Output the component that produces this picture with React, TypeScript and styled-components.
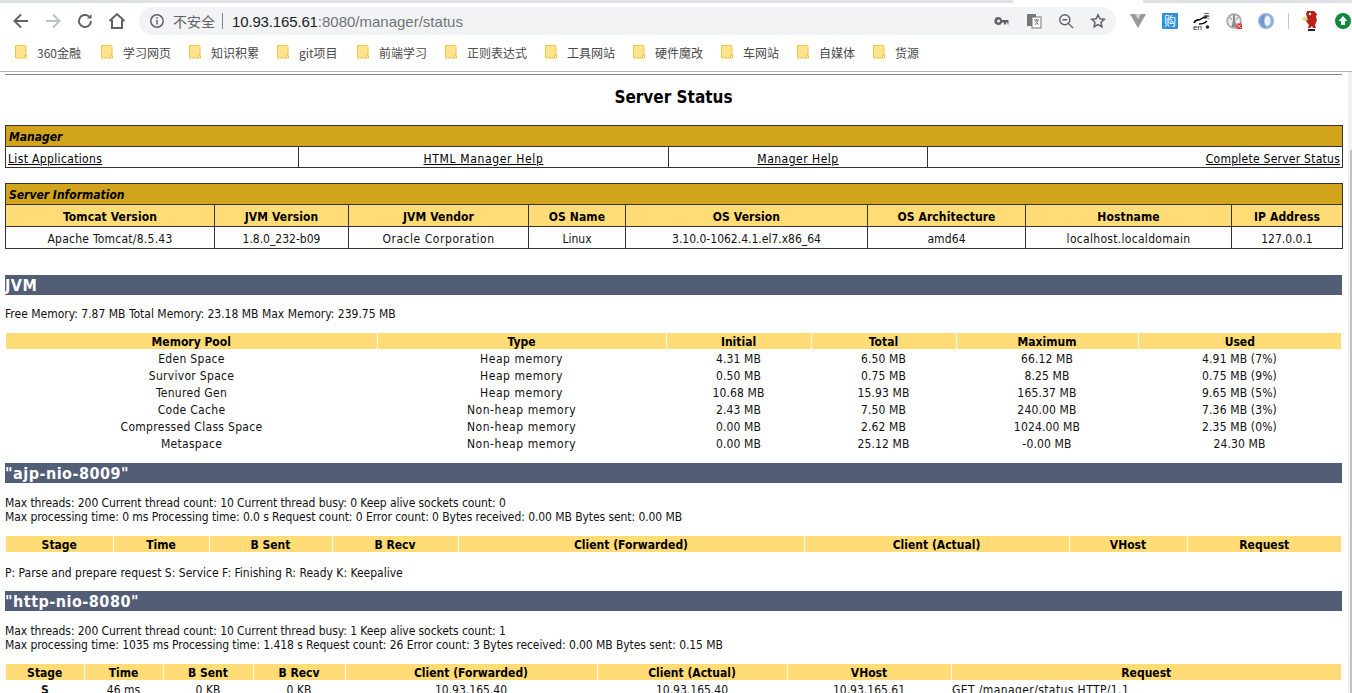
import { createGlobalStyle } from 'styled-components';
import styled from 'styled-components';

const GlobalStyle = createGlobalStyle`
  html, body {
    margin: 0;
    padding: 0;
    background: #fff;
    overflow: hidden;
    height: 693px;
  }
  body {
    font-family: 'DejaVu Sans', 'Noto Sans CJK SC', sans-serif;
    font-stretch: condensed;
    font-size: 12px;
    color: #111;
  }
`;

const Browser = styled.div`
  width: 1352px;
  height: 72px;
  background: #fff;
  border-bottom: 1px solid #b4b4b4;
  box-sizing: border-box;
`;
const TabStrip = styled.div`
  height: 3px;
  display: flex;
  background: #dee1e6;
  padding-left: 1013px;
`;
const ActiveTab = styled.div`
  width: 130px;
  background: #fff;
`;
const Toolbar = styled.div`
  height: 36px;
  display: flex;
  align-items: center;
  padding-left: 11px;
`;
const NavIcon = styled.svg`
  width: 20px;
  height: 20px;
  margin-right: 12px;
  flex-shrink: 0;
`;
const Address = styled.div`
  width: 977px;
  height: 28px;
  flex: none;
  border-radius: 14px;
  background: #f1f3f4;
  display: flex;
  align-items: center;
  padding-left: 10px;
  box-sizing: border-box;
  font-family: 'Liberation Sans', 'Noto Sans CJK SC', sans-serif;
  font-stretch: normal;
`;
const Insecure = styled.span`
  color: #5f6368;
  font-size: 14px;
  margin-left: 8px;
`;
const Divider = styled.span`
  width: 1px;
  height: 16px;
  background: #80868b;
  margin: 0 9px 0 7px;
`;
const Host = styled.span`
  color: #202124;
  font-size: 15px;
  letter-spacing: -0.15px;
`;
const Rest = styled.span`
  color: #70757a;
  font-size: 15px;
`;
const AddressIcons = styled.div`
  margin-left: auto;
  display: flex;
  align-items: center;
  gap: 16px;
  padding-right: 10px;
`;
const Extensions = styled.div`
  margin-left: 6px;
  display: flex;
  align-items: center;
`;
const Slot = styled.div<{ $w: number }>`
  width: ${(p) => p.$w}px;
  height: 24px;
  display: flex;
  align-items: center;
  justify-content: center;
  flex: none;
`;
const BookmarkBar = styled.div`
  height: 26px;
  display: flex;
  align-items: center;
  padding-left: 15px;
  font-family: 'Noto Sans CJK SC', sans-serif;
  font-stretch: normal;
  font-size: 12px;
  color: #4a4a4a;
`;
const Bookmark = styled.div<{ $w: number }>`
  width: ${(p) => p.$w}px;
  display: flex;
  align-items: center;
  gap: 10px;
  flex-shrink: 0;
`;
const FolderIcon = styled.svg`
  flex-shrink: 0;
`;

const Main = styled.div`
  display: flex;
  height: 621px;
  overflow: hidden;
`;
const Page = styled.div`
  padding: 2px 0 0 5px;
  width: 1348px;
  flex: none;
  box-sizing: border-box;
`;
const ScrollTrack = styled.div`
  width: 4px;
  flex: none;
  background: #f1f1f1;
  padding: 78px 0 0 2px;
  box-sizing: border-box;
  display: flex;
`;
const ScrollThumb = styled.div`
  flex: 1;
  background: #c1c1c1;
`;
const Rule = styled.div`
  height: 1px;
  width: 1337px;
  background: #808080;
`;
const Title = styled.h1`
  margin: 11px 0 0;
  height: 39px;
  width: 1337px;
  text-align: center;
  font-size: 17px;
  font-weight: bold;
  color: #000;
  line-height: 22px;
`;

const BoxTable = styled.table`
  width: 1337px;
  table-layout: fixed;
  border-collapse: collapse;
  font-size: 12px;
  margin-bottom: 15px;
  & td {
    border: 1px solid #333;
    padding: 2px 2px 0;
    height: 18px;
    line-height: 14px;
    overflow: hidden;
    white-space: nowrap;
  }
`;
const BarCell = styled.td`
  background: #d2a41c;
  font-weight: bold;
  font-style: italic;
  color: #000;
  padding-left: 3px !important;
`;
const LinkCell = styled.td<{ $align: string; $ls: number }>`
  text-align: ${(p) => p.$align};
  letter-spacing: ${(p) => p.$ls}px;
  && {
    padding-top: 4px;
    height: 16px;
  }
  & a {
    color: #000;
    text-decoration: underline;
  }
`;
const HeadCell = styled.td`
  background: #ffdc75;
  font-weight: bold;
  text-align: center;
  color: #000;
  letter-spacing: 0.1px;
  && {
    height: 19px;
  }
`;
const ValueCell = styled.td<{ $ls: number }>`
  text-align: center;
  letter-spacing: ${(p) => p.$ls}px;
  && {
    height: 19px;
  }
`;

const SectionTitle = styled.h2<{ $top: number }>`
  margin: ${(p) => p.$top}px 0 0;
  width: 1337px;
  height: 20px;
  line-height: 22px;
  background: #525d76;
  color: #fff;
  font-size: 16px;
  font-weight: bold;
  letter-spacing: 0.5px;
`;
const Info = styled.div<{ $top: number; $tight?: boolean }>`
  margin-top: ${(p) => p.$top}px;
  line-height: 14px;
  white-space: nowrap;
  letter-spacing: ${(p) => (p.$tight ? '-0.075px' : '0')};
`;
const DataTable = styled.table<{ $top: number }>`
  width: 1335px;
  margin: ${(p) => p.$top}px 0 0 1px;
  table-layout: fixed;
  border-collapse: collapse;
  font-size: 12px;
  & td, & th {
    white-space: nowrap;
    text-align: center;
  }
  & td {
    padding: 4px 0 0;
    height: 13px;
    line-height: 13px;
  }
  & th {
    padding: 2px 0 0;
    height: 14px;
    line-height: 14px;
    background: #ffdc75;
    color: #000;
    border-left: 1px solid #fff;
  }
  & th:first-child {
    border-left: 0;
  }
`;
const PoolTable = styled(DataTable)`
  & td:nth-child(1) {
    letter-spacing: 0.3px;
  }
  & td:nth-child(2) {
    letter-spacing: 0.55px;
  }
  & td:nth-child(n + 3) {
    letter-spacing: 0.15px;
  }
`;
const LeftCell = styled.td`
  && {
    text-align: left;
    padding-left: 1px;
    letter-spacing: 0.4px;
  }
`;

const sw = '#5f6368';

const Folder = () => (
  <FolderIcon width="12" height="14" viewBox="0 0 12 14">
    <path d="M.5.5h9.5a1 1 0 0 1 1 1v9.5h-1.5v2H1.5a1 1 0 0 1-1-1z" fill="#ffe38e" stroke="#eec643" />
    <path d="M9.5 10.5h2v2.5h-2z" fill="#fff" stroke="#eec643" />
  </FolderIcon>
);

const marks: [string, number][] = [
  ['360金融', 86],
  ['学习网页', 88],
  ['知识积累', 88],
  ['git项目', 80],
  ['前端学习', 88],
  ['正则表达式', 100],
  ['工具网站', 88],
  ['硬件魔改', 88],
  ['车网站', 76],
  ['自媒体', 76],
  ['货源', 60],
];

const serverHead = ['Tomcat Version', 'JVM Version', 'JVM Vendor', 'OS Name', 'OS Version', 'OS Architecture', 'Hostname', 'IP Address'];
const serverVals: [string, number][] = [
  ['Apache Tomcat/8.5.43', 0.25],
  ['1.8.0_232-b09', 0],
  ['Oracle Corporation', 0.55],
  ['Linux', 0],
  ['3.10.0-1062.4.1.el7.x86_64', 0],
  ['amd64', 0.1],
  ['localhost.localdomain', 0.3],
  ['127.0.0.1', 0],
];
const serverCols = [209, 134, 180, 97, 242, 158, 206, 111];

const poolCols = [371, 289, 145, 145, 182, 203];
const poolHead = ['Memory Pool', 'Type', 'Initial', 'Total', 'Maximum', 'Used'];
const pools = [
  ['Eden Space', 'Heap memory', '4.31 MB', '6.50 MB', '66.12 MB', '4.91 MB (7%)'],
  ['Survivor Space', 'Heap memory', '0.50 MB', '0.75 MB', '8.25 MB', '0.75 MB (9%)'],
  ['Tenured Gen', 'Heap memory', '10.68 MB', '15.93 MB', '165.37 MB', '9.65 MB (5%)'],
  ['Code Cache', 'Non-heap memory', '2.43 MB', '7.50 MB', '240.00 MB', '7.36 MB (3%)'],
  ['Compressed Class Space', 'Non-heap memory', '0.00 MB', '2.62 MB', '1024.00 MB', '2.35 MB (0%)'],
  ['Metaspace', 'Non-heap memory', '0.00 MB', '25.12 MB', '-0.00 MB', '24.30 MB'],
];

const ajpCols = [107, 96, 123, 126, 346, 265, 118, 154];
const httpCols = [78, 79, 90, 92, 252, 190, 164, 390];
const threadHead = ['Stage', 'Time', 'B Sent', 'B Recv', 'Client (Forwarded)', 'Client (Actual)', 'VHost', 'Request'];

const Cols = ({ widths }: { widths: number[] }) => (
  <colgroup>
    {widths.map((w, i) => (
      <col key={i} width={w} />
    ))}
  </colgroup>
);

const App = () => {
  return (
    <>
      <GlobalStyle />
      <Browser>
        <TabStrip>
          <ActiveTab />
        </TabStrip>
        <Toolbar>
          <NavIcon viewBox="0 0 20 20" fill="none" stroke={sw} strokeWidth="2">
            <path d="M17 10H4M10 3.5 3.5 10l6.5 6.5" />
          </NavIcon>
          <NavIcon viewBox="0 0 20 20" fill="none" stroke="#bdc1c6" strokeWidth="2">
            <path d="M3 10h13M10 3.5l6.5 6.5-6.5 6.5" />
          </NavIcon>
          <NavIcon viewBox="0 0 20 20" fill="none" stroke={sw} strokeWidth="2">
            <path d="M16 10a6 6 0 1 1-1.8-4.3" />
            <path d="M16.5 3v4.5H12" fill={sw} stroke="none" />
          </NavIcon>
          <NavIcon viewBox="0 0 20 20" fill="none" stroke={sw} strokeWidth="2">
            <path d="M2.5 10 10 3l7.5 7M5 9v8h10V9" />
          </NavIcon>
          <Address>
            <svg width="16" height="16" viewBox="0 0 16 16" fill="none" stroke={sw} strokeWidth="1.5">
              <circle cx="8" cy="8" r="6.2" />
              <path d="M8 7v4.5M8 4.3v1.5" />
            </svg>
            <Insecure>不安全</Insecure>
            <Divider />
            <Host>10.93.165.61</Host>
            <Rest>:8080/manager/status</Rest>
            <AddressIcons>
              <svg width="16" height="16" viewBox="0 0 16 16" fill={sw}>
                <path d="M4.5 4a4 4 0 1 0 3.6 5.5H10v2h2v-2h1.5v2h1V7H8.1A4 4 0 0 0 4.5 4zm0 2.5a1.5 1.5 0 1 1 0 3 1.5 1.5 0 0 1 0-3z" />
              </svg>
              <svg width="16" height="16" viewBox="0 0 16 16">
                <rect x="1" y="1" width="9" height="12" fill="#777" />
                <rect x="6" y="4" width="9" height="11" fill="#fff" stroke="#777" />
                <path d="M8 7h5M10.5 6v1M9 12l3.5-5M9.5 8l3 4" stroke="#777" fill="none" />
              </svg>
              <svg width="16" height="16" viewBox="0 0 16 16" fill="none" stroke={sw} strokeWidth="1.4">
                <circle cx="6.8" cy="6.8" r="5" />
                <path d="M4.5 6.8h4.6M10.5 10.5 15 15" />
              </svg>
              <svg width="16" height="16" viewBox="0 0 16 16" fill="none" stroke={sw} strokeWidth="1.5">
                <path d="M8 1.8l1.9 4 4.4.5-3.3 3 .9 4.4L8 11.5l-3.9 2.2.9-4.4-3.3-3 4.4-.5z" />
              </svg>
            </AddressIcons>
          </Address>
          <Extensions>
            <Slot $w={32}>
              <svg width="16" height="14" viewBox="0 0 16 14">
                <path d="M0 0h16L8 14z" fill="#9a9a9a" />
                <path d="M5 0h6L8 5.5z" fill="#d0d0d0" />
              </svg>
            </Slot>
            <Slot $w={32}>
              <svg width="16" height="16" viewBox="0 0 16 16">
                <rect width="16" height="16" rx="1" fill="#2d8fe0" />
                <text x="8" y="12.5" fontSize="12" fill="#fff" textAnchor="middle" fontFamily="Noto Sans CJK SC">购</text>
              </svg>
            </Slot>
            <Slot $w={32}>
              <svg width="18" height="18" viewBox="0 0 18 18">
                <path d="M1 11C3 6 6 9 8 7s3-2 6-2M6 12c3 0 5 0 8-3" stroke="#111" strokeWidth="1.6" fill="none" />
                <text x="0" y="17.5" fontSize="8" fill="#111" fontFamily="Liberation Sans">en</text>
                <text x="10.5" y="6" fontSize="6" fill="#222" fontFamily="Noto Sans CJK SC">英</text>
                <circle cx="14.5" cy="15" r="1.8" fill="#222" />
              </svg>
            </Slot>
            <Slot $w={32}>
              <svg width="16" height="16" viewBox="0 0 16 16">
                <circle cx="8" cy="8" r="7.7" fill="#a8a8a8" />
                <circle cx="8" cy="8" r="6" fill="#ececec" />
                <path d="M7 2h2v5l1.5 7h-5L7 7z" fill="#8c8c8c" />
                <path d="M3.5 4 6 7M12.5 4 10 7" stroke="#8c8c8c" fill="none" />
                <rect x="10.5" y="10.5" width="5.5" height="5.5" fill="#e8242c" />
                <path d="M11.5 11.5l3.5 3.5M15 11.5 11.5 15" stroke="#fff" strokeWidth="0.8" />
              </svg>
            </Slot>
            <Slot $w={32}>
              <svg width="16" height="16" viewBox="0 0 16 16">
                <circle cx="8" cy="8" r="8" fill="#8fb2de" />
                <path d="M2 8a6 7 0 0 1 6-6.5C5 4 5 12 8 14.5A6 7 0 0 1 2 8z" fill="#6a97cf" />
                <ellipse cx="9.5" cy="8" rx="3" ry="5" fill="#eef4fb" />
              </svg>
            </Slot>
            <Slot $w={12}>
              <svg width="1" height="16" viewBox="0 0 1 16">
                <rect width="1" height="16" fill="#c6c8cb" />
              </svg>
            </Slot>
            <Slot $w={32}>
              <svg width="16" height="20" viewBox="0 0 16 20">
                <path d="M5 0h7l3 3-1 3 1 3-2 5 1 3h-3l-1-2-2 2H6l1-3-3-4 1-4-1-3z" fill="#b8201c" />
                <circle cx="8" cy="3" r="1.2" fill="#fff" />
                <path d="M0 7l5-1 1 3-4 1z" fill="#e8d070" />
                <path d="M6 18h7v2H6z" fill="#222" />
              </svg>
            </Slot>
            <Slot $w={34}>
              <svg width="16" height="16" viewBox="0 0 16 16">
                <circle cx="8" cy="8" r="8" fill="#0e8a3c" />
                <path d="M8 3l4.5 5H10v4H6V8H3.5z" fill="#fff" />
              </svg>
            </Slot>
          </Extensions>
        </Toolbar>
        <BookmarkBar>
          {marks.map(([name, w]) => (
            <Bookmark key={name} $w={w}>
              <Folder />
              {name}
            </Bookmark>
          ))}
        </BookmarkBar>
      </Browser>
      <Main>
        <Page>
          <Rule />
          <Title>Server Status</Title>
          <BoxTable>
            <Cols widths={[293, 370, 259, 415]} />
            <tbody>
              <tr>
                <BarCell colSpan={4}>Manager</BarCell>
              </tr>
              <tr>
                <LinkCell $align="left" $ls={0.35}><a>List Applications</a></LinkCell>
                <LinkCell $align="center" $ls={0.65}><a>HTML Manager Help</a></LinkCell>
                <LinkCell $align="center" $ls={0.5}><a>Manager Help</a></LinkCell>
                <LinkCell $align="right" $ls={0.25}><a>Complete Server Status</a></LinkCell>
              </tr>
            </tbody>
          </BoxTable>
          <BoxTable>
            <Cols widths={serverCols} />
            <tbody>
              <tr>
                <BarCell colSpan={8}>Server Information</BarCell>
              </tr>
              <tr>
                {serverHead.map((h) => (
                  <HeadCell key={h}>{h}</HeadCell>
                ))}
              </tr>
              <tr>
                {serverVals.map(([v, ls]) => (
                  <ValueCell key={v} $ls={ls}>{v}</ValueCell>
                ))}
              </tr>
            </tbody>
          </BoxTable>
          <SectionTitle $top={26}>JVM</SectionTitle>
          <Info $top={12}>Free Memory: 7.87 MB Total Memory: 23.18 MB Max Memory: 239.75 MB</Info>
          <PoolTable $top={12}>
            <Cols widths={poolCols} />
            <thead>
              <tr>
                {poolHead.map((h) => (
                  <th key={h}>{h}</th>
                ))}
              </tr>
            </thead>
            <tbody>
              {pools.map((row) => (
                <tr key={row[0]}>
                  {row.map((c, i) => (
                    <td key={i}>{c}</td>
                  ))}
                </tr>
              ))}
            </tbody>
          </PoolTable>
          <SectionTitle $top={12}>"ajp-nio-8009"</SectionTitle>
          <Info $top={13} $tight>
            Max threads: 200 Current thread count: 10 Current thread busy: 0 Keep alive sockets count: 0
            <br />
            Max processing time: 0 ms Processing time: 0.0 s Request count: 0 Error count: 0 Bytes received: 0.00 MB Bytes sent: 0.00 MB
          </Info>
          <DataTable $top={12}>
            <Cols widths={ajpCols} />
            <thead>
              <tr>
                {threadHead.map((h) => (
                  <th key={h}>{h}</th>
                ))}
              </tr>
            </thead>
          </DataTable>
          <Info $top={14}>P: Parse and prepare request S: Service F: Finishing R: Ready K: Keepalive</Info>
          <SectionTitle $top={11}>"http-nio-8080"</SectionTitle>
          <Info $top={13} $tight>
            Max threads: 200 Current thread count: 10 Current thread busy: 1 Keep alive sockets count: 1
            <br />
            Max processing time: 1035 ms Processing time: 1.418 s Request count: 26 Error count: 3 Bytes received: 0.00 MB Bytes sent: 0.15 MB
          </Info>
          <DataTable $top={12}>
            <Cols widths={httpCols} />
            <thead>
              <tr>
                {threadHead.map((h) => (
                  <th key={h}>{h}</th>
                ))}
              </tr>
            </thead>
            <tbody>
              <tr>
                <td><b>S</b></td>
                <td>46 ms</td>
                <td>0 KB</td>
                <td>0 KB</td>
                <td>10.93.165.40</td>
                <td>10.93.165.40</td>
                <td>10.93.165.61</td>
                <LeftCell>GET /manager/status HTTP/1.1</LeftCell>
              </tr>
            </tbody>
          </DataTable>
        </Page>
        <ScrollTrack>
          <ScrollThumb />
        </ScrollTrack>
      </Main>
    </>
  );
};

export default App;
